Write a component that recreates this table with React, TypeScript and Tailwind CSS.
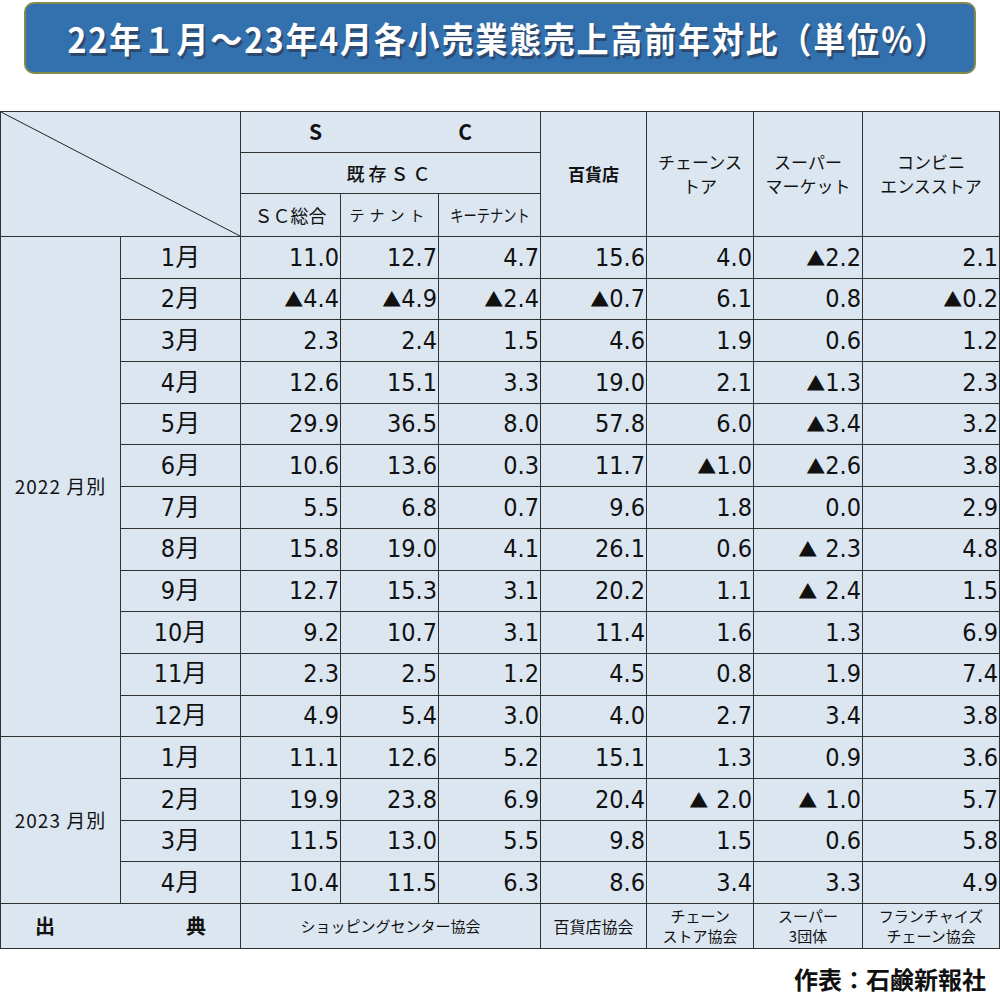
const NUM = "font-['Liberation_Sans_Narrow','DejaVu_Sans_Condensed','Noto_Sans_CJK_JP',sans-serif]";
const JP = "font-['Noto_Sans_CJK_JP','Noto_Sans',sans-serif]";

type Row = { m: string; v: string[] };

const Y2022: Row[] = [
  { m: '1月', v: ['11.0', '12.7', '4.7', '15.6', '4.0', '▲2.2', '2.1'] },
  { m: '2月', v: ['▲4.4', '▲4.9', '▲2.4', '▲0.7', '6.1', '0.8', '▲0.2'] },
  { m: '3月', v: ['2.3', '2.4', '1.5', '4.6', '1.9', '0.6', '1.2'] },
  { m: '4月', v: ['12.6', '15.1', '3.3', '19.0', '2.1', '▲1.3', '2.3'] },
  { m: '5月', v: ['29.9', '36.5', '8.0', '57.8', '6.0', '▲3.4', '3.2'] },
  { m: '6月', v: ['10.6', '13.6', '0.3', '11.7', '▲1.0', '▲2.6', '3.8'] },
  { m: '7月', v: ['5.5', '6.8', '0.7', '9.6', '1.8', '0.0', '2.9'] },
  { m: '8月', v: ['15.8', '19.0', '4.1', '26.1', '0.6', '▲ 2.3', '4.8'] },
  { m: '9月', v: ['12.7', '15.3', '3.1', '20.2', '1.1', '▲ 2.4', '1.5'] },
  { m: '10月', v: ['9.2', '10.7', '3.1', '11.4', '1.6', '1.3', '6.9'] },
  { m: '11月', v: ['2.3', '2.5', '1.2', '4.5', '0.8', '1.9', '7.4'] },
  { m: '12月', v: ['4.9', '5.4', '3.0', '4.0', '2.7', '3.4', '3.8'] },
];

const Y2023: Row[] = [
  { m: '1月', v: ['11.1', '12.6', '5.2', '15.1', '1.3', '0.9', '3.6'] },
  { m: '2月', v: ['19.9', '23.8', '6.9', '20.4', '▲ 2.0', '▲ 1.0', '5.7'] },
  { m: '3月', v: ['11.5', '13.0', '5.5', '9.8', '1.5', '0.6', '5.8'] },
  { m: '4月', v: ['10.4', '11.5', '6.3', '8.6', '3.4', '3.3', '4.9'] },
];

const cell = 'border border-[#333] p-0';

// "▲" marks a decrease; "▲ x" (with space) is set a little wider in the source table
function Value({ v }: { v: string }) {
  if (!v.startsWith('▲')) return <>{v}</>;
  const spaced = v.startsWith('▲ ');
  return (
    <>
      <span className={`${JP} text-[19px] ${spaced ? 'mr-[8px]' : ''}`}>▲</span>
      {v.replace('▲', '').trim()}
    </>
  );
}

function YearBlock({ label, rows }: { label: string; rows: Row[] }) {
  return (
    <>
      {rows.map((r, i) => (
        <tr key={label + r.m} className="h-[41.7px]">
          {i === 0 && (
            <td rowSpan={rows.length} className={`${cell} ${JP} text-center text-[19px] tracking-[1px] text-[#111]`}>
              {label}
            </td>
          )}
          <td className={`${cell} ${NUM} text-center text-[25px] text-[#111]`}>{r.m}</td>
          {r.v.map((v, j) => (
            <td key={j} className={`${cell} ${NUM} whitespace-nowrap pr-[1px] text-right text-[25px] text-[#111]`}>
              <Value v={v} />
            </td>
          ))}
        </tr>
      ))}
    </>
  );
}

export default function App() {
  return (
    <div className="flex h-[1002px] w-[1000px] flex-col bg-white">
      {/* Title banner */}
      <div className="mx-[24px] mt-[2px] flex h-[72px] shrink-0 items-center justify-center rounded-[10px] border-2 border-[#858a4c] bg-[#3271ad]">
        <h1
          className={`${JP} ml-[16px] scale-y-110 whitespace-nowrap text-[32px] font-bold tracking-[1.8px] text-white`}
          style={{ textShadow: '2px 2px 0 rgba(40,40,60,0.55)' }}
        >
          22年１月～23年4月各小売業態売上高前年対比（単位％）
        </h1>
      </div>

      {/* Table */}
      <table className="mt-[37px] w-[999px] shrink-0 table-fixed border-collapse bg-[#dce6f1]">
        <colgroup>
          <col className="w-[120px]" />
          <col className="w-[120px]" />
          <col className="w-[100px]" />
          <col className="w-[98px]" />
          <col className="w-[102px]" />
          <col className="w-[106px]" />
          <col className="w-[107px]" />
          <col className="w-[109px]" />
          <col className="w-[137px]" />
        </colgroup>
        <thead>
          <tr className="h-[41px]">
            <td colSpan={2} rowSpan={3} className={`${cell} relative`}>
              <svg className="absolute inset-0 h-full w-full" preserveAspectRatio="none" viewBox="0 0 100 100">
                <line x1="0" y1="0" x2="100" y2="100" stroke="#222" strokeWidth="1" vectorEffect="non-scaling-stroke" />
              </svg>
            </td>
            <td colSpan={3} className={cell}>
              <div className={`${JP} flex justify-between px-[68px] text-[21px] font-bold text-[#111]`}>
                <span>S</span>
                <span>C</span>
              </div>
            </td>
            <td rowSpan={3} className={`${cell} ${JP} text-center text-[17px] font-bold text-[#111]`}>百貨店</td>
            <td rowSpan={3} className={`${cell} ${JP} text-center text-[17px] leading-[24px] text-[#111]`}>
              <div>チェーンス</div>
              <div>トア</div>
            </td>
            <td rowSpan={3} className={`${cell} ${JP} text-center text-[17px] leading-[24px] text-[#111]`}>
              <div>スーパー</div>
              <div>マーケット</div>
            </td>
            <td rowSpan={3} className={`${cell} ${JP} text-center text-[17px] leading-[24px] text-[#111]`}>
              <div>コンビニ</div>
              <div>エンスストア</div>
            </td>
          </tr>
          <tr className="h-[41px]">
            <td colSpan={3} className={`${cell} ${JP} text-center text-[18px] font-medium tracking-[4px] text-[#111]`}>既存ＳＣ</td>
          </tr>
          <tr className="h-[43px]">
            <td className={`${cell} ${JP} text-center text-[18px] text-[#111]`}>ＳＣ総合</td>
            <td className={`${cell} ${JP} text-center text-[15px] tracking-[5px] text-[#111]`}>テナント</td>
            <td className={`${cell} ${JP} overflow-hidden whitespace-nowrap text-center text-[17px] text-[#111]`}>
              <span className="inline-block scale-x-[0.78]">キーテナント</span>
            </td>
          </tr>
        </thead>
        <tbody>
          <YearBlock label="2022 月別" rows={Y2022} />
          <YearBlock label="2023 月別" rows={Y2023} />
          <tr className="h-[45px]">
            <td colSpan={2} className={cell}>
              <div className={`${JP} flex justify-between px-[34px] text-[20px] font-bold text-[#111]`}>
                <span>出</span>
                <span>典</span>
              </div>
            </td>
            <td colSpan={3} className={`${cell} ${JP} text-center text-[15px] text-[#111]`}>ショッピングセンター協会</td>
            <td className={`${cell} ${JP} text-center text-[16px] text-[#111]`}>百貨店協会</td>
            <td className={`${cell} ${JP} text-center text-[15px] leading-[20px] text-[#111]`}>
              <div>チェーン</div>
              <div>ストア協会</div>
            </td>
            <td className={`${cell} ${JP} text-center text-[15px] leading-[20px] text-[#111]`}>
              <div>スーパー</div>
              <div>3団体</div>
            </td>
            <td className={`${cell} ${JP} text-center text-[15px] leading-[20px] text-[#111]`}>
              <div>フランチャイズ</div>
              <div>チェーン協会</div>
            </td>
          </tr>
        </tbody>
      </table>

      <div className={`${JP} mt-[12px] pr-[14px] text-right text-[24px] font-bold text-[#111]`}>作表：石鹸新報社</div>
    </div>
  );
}
